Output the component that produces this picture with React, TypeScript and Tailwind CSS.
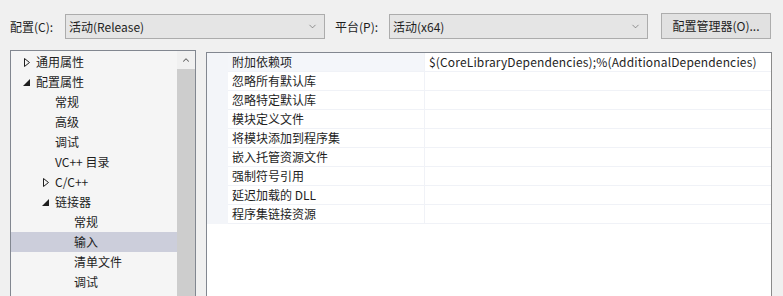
import { ChevronDown, ChevronUp } from 'lucide-react';

const font = { fontFamily: '"Segoe UI", "Noto Sans CJK SC", "Noto Sans", sans-serif' };

type TreeItem = { label: string; level: number; arrow?: 'closed' | 'open'; selected?: boolean };

const tree: TreeItem[] = [
  { label: '通用属性', level: 0, arrow: 'closed' },
  { label: '配置属性', level: 0, arrow: 'open' },
  { label: '常规', level: 1 },
  { label: '高级', level: 1 },
  { label: '调试', level: 1 },
  { label: 'VC++ 目录', level: 1 },
  { label: 'C/C++', level: 1, arrow: 'closed' },
  { label: '链接器', level: 1, arrow: 'open' },
  { label: '常规', level: 2 },
  { label: '输入', level: 2, selected: true },
  { label: '清单文件', level: 2 },
  { label: '调试', level: 2 },
];

const props = [
  { name: '附加依赖项', value: '$(CoreLibraryDependencies);%(AdditionalDependencies)' },
  { name: '忽略所有默认库', value: '' },
  { name: '忽略特定默认库', value: '' },
  { name: '模块定义文件', value: '' },
  { name: '将模块添加到程序集', value: '' },
  { name: '嵌入托管资源文件', value: '' },
  { name: '强制符号引用', value: '' },
  { name: '延迟加载的 DLL', value: '' },
  { name: '程序集链接资源', value: '' },
];

const Arrow = ({ kind }: { kind: 'closed' | 'open' }) =>
  kind === 'closed' ? (
    <svg width="6" height="9" viewBox="0 0 6 9">
      <path d="M0.5 0.5 L5.5 4.5 L0.5 8.5 Z" fill="none" stroke="#1e1e1e" strokeWidth="1" />
    </svg>
  ) : (
    <svg width="7" height="7" viewBox="0 0 7 7">
      <path d="M7 0 L7 7 L0 7 Z" fill="#1e1e1e" />
    </svg>
  );

const Combo = ({ text, width }: { text: string; width: string }) => (
  <div className={`${width} h-[25px] flex items-center justify-between border border-[#acacac] bg-[#e5e5e5] pl-[3px] pr-[6px]`}>
    <span>{text}</span>
    <ChevronDown size={11} strokeWidth={1.3} color="#555" />
  </div>
);

export default function App() {
  return (
    <div style={font} className="w-[783px] h-[296px] overflow-hidden bg-[#f0f0f0] text-[12px] text-[#1e1e1e]">
      <div className="h-[52px] flex items-start pt-[14px]">
        <span className="ml-[10px] w-[55px] leading-[25px]">配置(C):</span>
        <Combo text="活动(Release)" width="w-[260px]" />
        <span className="ml-[10px] w-[54px] leading-[25px]">平台(P):</span>
        <Combo text="活动(x64)" width="w-[259px]" />
        <div className="ml-[13px] -mt-[1px] w-[110px] h-[26px] border border-[#adadad] bg-[#e1e1e1] flex items-center justify-center">
          配置管理器(O)...
        </div>
      </div>
      <div className="flex items-start">
        <div className="ml-[10px] -mt-[2px] w-[186px] h-[260px] border border-[#828790] bg-[#f5f5f5] flex">
          <div className="w-[166px] pt-[1px]">
            {tree.map((t, i) => (
              <div
                key={i}
                className={`h-[20px] flex items-center ${t.selected ? 'bg-[#cccedb]' : ''}`}
              >
                <div
                  className={`w-[25px] flex items-center justify-end pr-[6px] shrink-0 ${
                    t.level === 0 ? 'ml-0' : t.level === 1 ? 'ml-[19px]' : 'ml-[38px]'
                  }`}
                >
                  {t.arrow && <Arrow kind={t.arrow} />}
                </div>
                <span>{t.label}</span>
              </div>
            ))}
          </div>
          <div className="w-[18px] bg-[#f0f0f0] flex flex-col">
            <div className="h-[18px] flex items-center justify-center">
              <ChevronUp size={10} strokeWidth={2.5} color="#606060" />
            </div>
            <div className="flex-1 bg-[#cdcdcd]" />
          </div>
        </div>
        <div className="ml-[10px] w-[566px] h-[250px] border border-[#828790] border-r-[#8a8a8a] bg-white">
          {props.map((p, i) => (
            <div key={i} className="h-[19px] flex">
              <div className="w-[21px] bg-[#f3f5f9]" />
              <div
                className={`w-[196px] flex items-center pl-[4px] border-b border-[#f0f2f7] ${
                  i === 0 ? 'bg-[#f4f6fa]' : 'bg-white'
                }`}
              >
                {p.name}
              </div>
              <div className="flex-1 flex items-center pl-[4px] border-l border-b border-[#f0f2f7] whitespace-nowrap tracking-[0.15px]">
                {p.value}
              </div>
            </div>
          ))}
        </div>
      </div>
    </div>
  );
}
